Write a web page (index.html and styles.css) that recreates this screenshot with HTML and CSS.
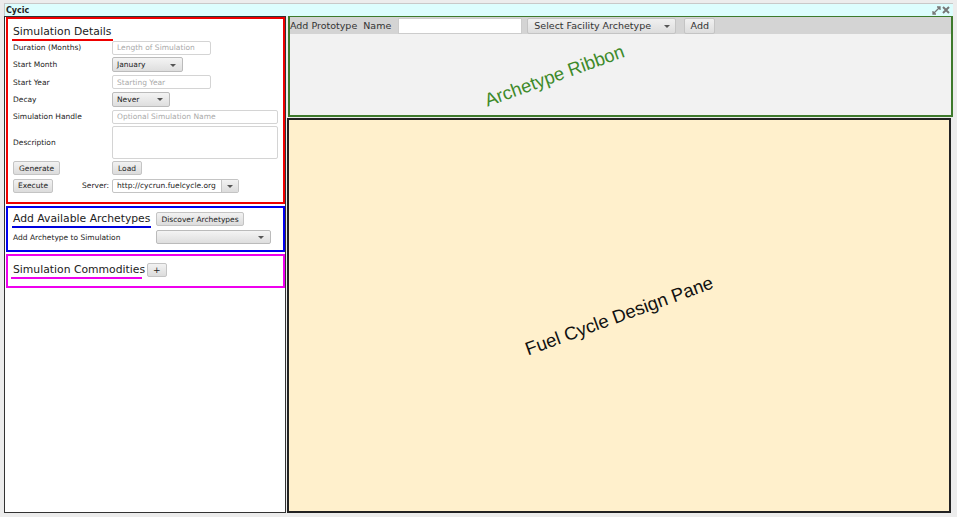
FILE: index.html
```html
<!DOCTYPE html>
<html>
<head>
<meta charset="utf-8">
<link rel="stylesheet" href="styles.css">
</head>
<body>
<div class="window">
  <div class="titlebar">
    <span class="title">Cycic</span>
    <span class="tools">
      <svg width="9" height="9" viewBox="0 0 9 9"><path d="M1 8 L8 1 M5 1 H8 V4 M1 5 V8 H4" stroke="#777" stroke-width="1.3" fill="none"/></svg>
      <svg width="8" height="8" viewBox="0 0 8 8"><path d="M1 1 L7 7 M7 1 L1 7" stroke="#777" stroke-width="2" fill="none"/></svg>
    </span>
  </div>
  <div class="content">
    <div class="left">
      <div class="box red">
        <div class="heading">Simulation Details<span class="uline u-red"></span></div>
        <div class="form">
          <label>Duration (Months)</label>
          <div class="field"><input class="txt w98" placeholder="Length of Simulation"></div>
          <label>Start Month</label>
          <div class="field"><span class="combo w70">January<i class="arrow"></i></span></div>
          <label>Start Year</label>
          <div class="field"><input class="txt w98" placeholder="Starting Year"></div>
          <label>Decay</label>
          <div class="field"><span class="combo w57">Never<i class="arrow"></i></span></div>
          <label>Simulation Handle</label>
          <div class="field"><input class="txt wfull" placeholder="Optional Simulation Name"></div>
          <label class="desc">Description</label>
          <div class="field"><textarea class="area"></textarea></div>
          <div class="field"><span class="btn">Generate</span></div>
          <div class="field"><span class="btn">Load</span></div>
        </div>
        <div class="execrow">
          <div class="execleft">
            <span class="btn exec">Execute</span>
            <span class="srvlabel">Server:</span>
          </div>
          <span class="srvcombo"><span class="srvtext">http://cycrun.fuelcycle.org</span><span class="srvbtn"><i class="arrow"></i></span></span>
        </div>
      </div>
      <div class="box blue">
        <div class="row1">
          <div class="heading">Add Available Archetypes<span class="uline u-blue"></span></div>
          <span class="btn disc">Discover Archetypes</span>
        </div>
        <div class="row2">
          <span class="small">Add Archetype to Simulation</span>
          <span class="combo wsel"><i class="arrow"></i></span>
        </div>
      </div>
      <div class="box magenta">
        <div class="row1">
          <div class="heading">Simulation Commodities<span class="uline u-mag"></span></div>
          <span class="btn plus">+</span>
        </div>
      </div>
    </div>
    <div class="right">
      <div class="ribbon">
        <div class="toolbar">
          <span class="tlabel">Add Prototype</span>
          <span class="tlabel">Name</span>
          <input class="nameinput">
          <span class="tcombo">Select Facility Archetype<i class="arrow"></i></span>
          <span class="tbtn">Add</span>
        </div>
        <div class="ribbon-body">
          <span class="ribbon-label">Archetype Ribbon</span>
        </div>
      </div>
      <div class="pane">
        <span class="pane-label">Fuel Cycle Design Pane</span>
      </div>
    </div>
  </div>
</div>
</body>
</html>
```
FILE: styles.css
```css
* { box-sizing: border-box; }
html, body { margin: 0; padding: 0; }
body {
  background: #ececec;
  font-family: "DejaVu Sans", Verdana, sans-serif;
  width: 957px;
  height: 517px;
  overflow: hidden;
}
.window {
  margin: 3px 4px 0 4px;
  height: 510px;
  display: flex;
  flex-direction: column;
}
.titlebar {
  height: 13px;
  background: #dcfdfd;
  border-top: 1px solid #c8c8c8;
  border-left: 1px solid #c8c8c8;
  display: flex;
  align-items: center;
  justify-content: space-between;
  padding: 0 3px 0 1px;
}
.title { font-size: 8px; font-weight: bold; color: #222; }
.tools { display: flex; gap: 1px; align-items: center; }
.content {
  flex: 1;
  display: flex;
  gap: 1px;
  min-height: 0;
}
.left {
  width: 282px;
  background: #fff;
  border: 1px solid #333;
  padding: 0 0 0 1px;
  display: flex;
  flex-direction: column;
  gap: 1px;
}
.box { border: 2px solid; width: 279px; }
.red { border-color: #ee0000; height: 187px; padding: 1px 4px 0 5px; }
.blue { border-color: #0000ee; height: 46px; margin-top: 1px; padding: 4px 4px 0 5px; }
.magenta { border-color: #ee00ee; height: 34px; margin-top: 1px; padding: 7px 4px 0 5px; }
.heading {
  position: relative;
  font-size: 10.8px;
  color: #222;
  display: inline-block;
  line-height: 14px;
}
.uline { position: absolute; left: -1px; right: -2px; bottom: -2px; height: 2px; }
.u-red { background: #ee0000; }
.u-blue { background: #0000dd; right: -1px; }
.u-mag { background: #ee00ee; right: 3px; left: -2px; }
.form {
  margin-top: 0;
  display: grid;
  grid-template-columns: 99px 1fr;
  grid-auto-rows: 17.25px;
  align-items: center;
}
label, .small { font-size: 7.5px; color: #222; }
.field { display: flex; align-items: center; }
.txt {
  height: 14px;
  border: 1px solid #d4d4d4;
  border-radius: 2px;
  font-family: inherit;
  font-size: 7.5px;
  padding: 0 4px;
  background: #fff;
}
.txt::placeholder { color: #aaa; }
.w98 { width: 99px; }
.wfull { width: 166px; }
.combo {
  position: relative;
  height: 15px;
  border: 1px solid #bbb;
  border-radius: 2px;
  background: linear-gradient(#f4f4f4, #dedede);
  font-size: 7.5px;
  color: #222;
  padding: 0 0 0 4px;
  display: flex;
  align-items: center;
}
.w70 { width: 71px; }
.w57 { width: 58px; }
.wsel { width: 115px; }
.arrow {
  position: absolute;
  right: 6px;
  top: 50%;
  margin-top: -1px;
  border-left: 3px solid transparent;
  border-right: 3px solid transparent;
  border-top: 3px solid #555;
}
.form > label.desc { grid-row: span 2; }
.form > label.desc + .field { grid-row: span 2; }
.field .area {
  width: 166px;
  height: 33px;
  border: 1px solid #d4d4d4;
  border-radius: 2px;
  resize: none;
  margin-top: 0;
}
.btn {
  display: inline-flex;
  align-items: center;
  height: 14px;
  padding: 0 5px;
  border: 1px solid #c4c4c4;
  border-radius: 2px;
  background: linear-gradient(#f2f2f2, #dcdcdc);
  font-size: 7.5px;
  color: #222;
  white-space: nowrap;
}
.execrow {
  display: grid;
  grid-template-columns: 99px auto;
  align-items: center;
  height: 17px;
}
.execleft { display: flex; align-items: center; justify-content: space-between; padding-right: 3px; }
.exec { padding: 0 4px; }
.srvlabel { font-size: 7.5px; color: #222; }
.srvcombo {
  display: flex;
  width: 127px;
  height: 14px;
  border: 1px solid #c4c4c4;
  border-radius: 2px;
  background: #fff;
}
.srvtext { font-size: 7.5px; color: #222; padding: 0 4px; display: flex; align-items: center; flex: 1; }
.srvbtn { position: relative; width: 17px; border-left: 1px solid #c4c4c4; background: linear-gradient(#f2f2f2, #dcdcdc); }
.srvbtn .arrow { right: 5px; }
.row1 { display: flex; align-items: center; gap: 6px; }
.disc { padding: 0 4px; margin-left: 0; }
.row2 { display: grid; grid-template-columns: 143px 115px; align-items: center; margin-top: 4px; }
.row2 .combo { height: 14px; }
.plus { padding: 0 5px; font-size: 9px; margin-left: -4px; }
.right {
  flex: 1;
  display: flex;
  flex-direction: column;
  gap: 1px;
}
.ribbon {
  height: 101px;
  border: 2px solid #3e7a2c;
  border-top-width: 1px;
  background: #f2f2f2;
  display: flex;
  flex-direction: column;
  margin-left: 1px;
}
.toolbar {
  height: 17px;
  background: #d4d4d4;
  display: flex;
  align-items: center;
  font-size: 9.5px;
  color: #333;
  white-space: nowrap;
}
.tlabel { margin-right: 7px; }
.tlabel:first-child { margin-right: 6px; }
.nameinput {
  width: 124px;
  height: 16px;
  border: 1px solid #ccc;
  background: #fff;
  margin-right: 5px;
}
.tcombo {
  position: relative;
  width: 149px;
  height: 16px;
  border: 1px solid #c4c4c4;
  border-radius: 2px;
  background: linear-gradient(#f0f0f0, #dddddd);
  padding-left: 6px;
  display: flex;
  align-items: center;
  margin-right: 8px;
}
.tcombo .arrow { right: 5px; }
.tbtn {
  height: 16px;
  width: 31px;
  border: 1px solid #c4c4c4;
  border-radius: 2px;
  background: linear-gradient(#f0f0f0, #dddddd);
  display: flex;
  align-items: center;
  justify-content: center;
}
.ribbon-body { flex: 1; display: flex; align-items: center; justify-content: center; }
.ribbon-label {
  font-family: "Liberation Sans", Arial, sans-serif;
  font-size: 18.5px;
  color: #3e8a2a;
  transform: translate(-66px, 1px) rotate(-20deg);
}
.pane {
  flex: 1;
  background: #fff0cc;
  border: 2px solid #222;
  margin-right: 2px;
  display: flex;
  align-items: center;
  justify-content: center;
}
.pane-label {
  font-family: "Liberation Sans", Arial, sans-serif;
  font-size: 18.5px;
  color: #111;
  transform: rotate(-20deg);
}
```
